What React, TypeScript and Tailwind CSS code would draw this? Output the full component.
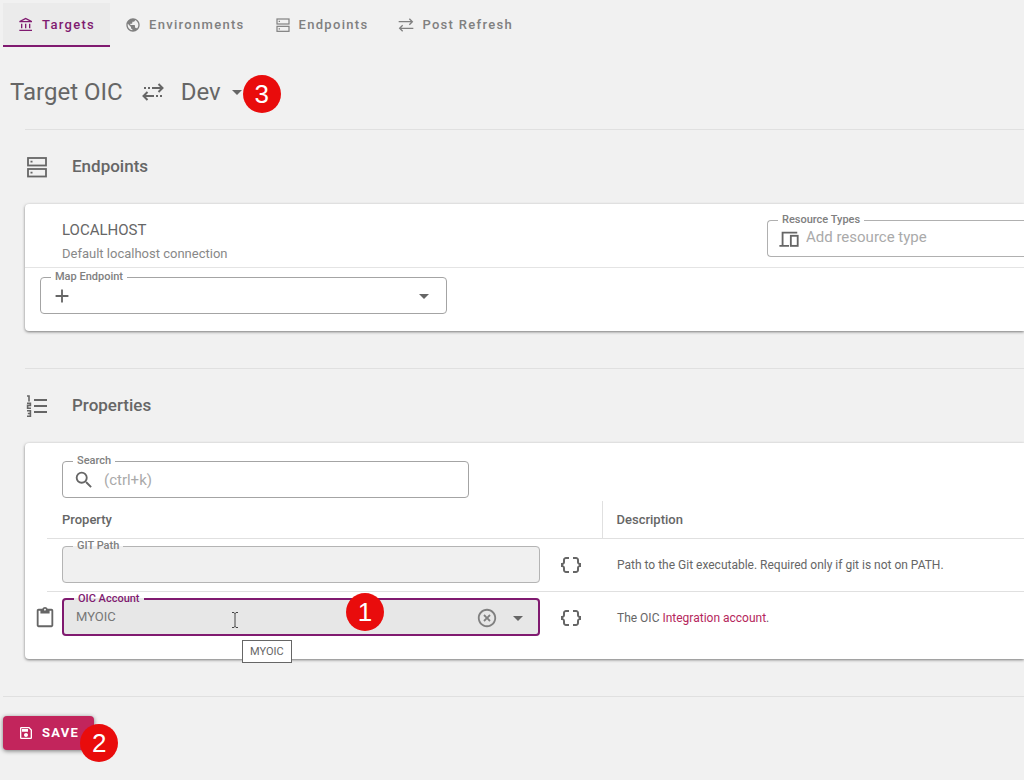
import type { ReactNode } from 'react'
import {
  MdAdd,
  MdArrowDropDown,
  MdContentPaste,
  MdDataObject,
  MdHighlightOff,
  MdOutlineAccountBalance,
  MdOutlineSave,
  MdPublic,
  MdSearch,
} from 'react-icons/md'

type IconProps = { className?: string }

function ServerIcon({ className }: IconProps) {
  return (
    <svg viewBox="0 0 24 24" fill="none" stroke="currentColor" strokeWidth="1.8" className={className}>
      <rect x="3" y="3" width="18" height="7.5" />
      <rect x="3" y="14" width="18" height="7.5" />
      <path d="M5.5 6.7h2M5.5 17.7h2" />
    </svg>
  )
}

function SwapIcon({ className }: IconProps) {
  return (
    <svg viewBox="0 0 24 24" fill="none" stroke="currentColor" strokeWidth="2" className={className}>
      <path d="M1 7h20M17 2.5 21.5 7 17 11.5M23 17H3M7 12.5 2.5 17 7 21.5" />
    </svg>
  )
}

function TransferIcon({ className }: IconProps) {
  return (
    <svg viewBox="0 0 24 24" fill="none" stroke="currentColor" strokeWidth="2" className={className}>
      <path d="M3 8h2M7 8h2M11 8h10M17.5 4 21.5 8l-4 4M21 16h-2M17 16h-2M13 16H3M6.5 12 2.5 16l4 4" />
    </svg>
  )
}

function NumberedListIcon({ className }: IconProps) {
  return (
    <svg viewBox="0 0 24 24" fill="none" stroke="currentColor" strokeWidth="1.6" className={className}>
      <path d="M2 2h2v5.5M2 9.2h3.4v2.2H2.6v2.8h3.4M2 16.8h3.4v5.4H2M2.8 19.5h2.6" />
      <path strokeWidth="2" d="M9 6h13M9 12h13M9 18h13" />
    </svg>
  )
}

function DevicesIcon({ className }: IconProps) {
  return (
    <svg viewBox="0 0 24 24" fill="none" stroke="currentColor" strokeWidth="2" className={className}>
      <path d="M21 5H5v14M1.5 19.5h10.5" />
      <rect x="14" y="8.5" width="7.5" height="11" />
    </svg>
  )
}

function TextCursor({ className }: IconProps) {
  return (
    <svg viewBox="0 0 8 16" fill="none" stroke="#444" className={className}>
      <path d="M1 .5h2l1 1 1-1h2M4 1v14M1 15.5h2l1-1 1 1h2" />
    </svg>
  )
}

const tabs = [
  { label: 'Targets', icon: MdOutlineAccountBalance, active: true },
  { label: 'Environments', icon: MdPublic },
  { label: 'Endpoints', icon: ServerIcon },
  { label: 'Post Refresh', icon: SwapIcon },
]

function Marker({ n, className }: { n: number; className: string }) {
  return (
    <span
      className={`absolute z-10 flex size-[38px] items-center justify-center rounded-full bg-[#e90c0c] font-['Liberation_Sans',sans-serif] text-[26px] leading-none text-white ${className}`}
    >
      {n}
    </span>
  )
}

type FieldProps = { id: string; label: string; className: string; labelClass?: string; children: ReactNode }

function Field({ id, label, className, labelClass = 'text-[#808080]', children }: FieldProps) {
  return (
    <fieldset className={`h-[43px] min-w-0 ${className}`}>
      <legend className={`ml-[10px] px-1 text-[11px] leading-3 font-medium ${labelClass}`}>
        <label htmlFor={id} className="block">{label}</label>
      </legend>
      <div className="flex h-[26px] items-center">{children}</div>
    </fieldset>
  )
}

function SectionHeading({ icon, title }: { icon: ReactNode; title: string }) {
  return (
    <div className="flex h-[74px] items-center gap-[23px] text-[#666]">
      {icon}
      <h2 className="text-[17px] font-medium">{title}</h2>
    </div>
  )
}

export default function App() {
  return (
    <div className="min-h-screen overflow-hidden bg-[#f1f1f1] pt-[3px] font-[Roboto,sans-serif] text-[#666]">
      <nav className="flex pl-[3px]">
        {tabs.map(({ label, icon: Icon, active }) => (
          <button
            key={label}
            type="button"
            className={`flex h-11 items-center gap-2 border-b-2 px-[15px] pt-0.5 text-[13px] font-medium tracking-widest ${
              active ? 'border-[#801a70] bg-[#ebebeb] text-[#801a70]' : 'border-transparent text-[#808080]'
            }`}
          >
            <Icon className="size-4" />
            {label}
          </button>
        ))}
      </nav>

      <header className="flex h-[82px] items-center pt-2 pl-[10px] text-2xl">
        <h1>Target OIC</h1>
        <TransferIcon className="mr-4 ml-[18px] size-6" />
        <div className="relative flex items-center">
          <select aria-label="Environment" className="appearance-none bg-transparent">
            <option>Dev</option>
          </select>
          <MdArrowDropDown className="ml-1 size-6" />
          <Marker n={3} className="-right-8 -bottom-[5px]" />
        </div>
      </header>

      <main className="pl-[25px]">
        <section className="border-t border-[#e0e0e0]">
          <SectionHeading icon={<ServerIcon className="size-6" />} title="Endpoints" />
          <div className="h-[127px] rounded-l bg-white shadow-[0_1px_3px_rgba(0,0,0,0.5)]">
            <div className="flex h-16 items-start justify-between border-b border-[#e4e4e4] pt-[10px]">
              <div className="pt-1 pl-[37px]">
                <p className="text-[15px] leading-6">LOCALHOST</p>
                <p className="text-[13px] leading-6 text-[#888]">Default localhost connection</p>
              </div>
              <Field id="resource-types" label="Resource Types" className="w-[257px] rounded-l border border-r-0 border-[#b0b0b0]">
                <DevicesIcon className="ml-[10px] size-[22px] shrink-0" />
                <input
                  id="resource-types"
                  placeholder="Add resource type"
                  className="ml-1.5 min-w-0 flex-1 bg-transparent pb-1 text-[15px] outline-none placeholder:text-[#aaa]"
                />
              </Field>
            </div>
            <div className="pt-[3px] pl-[15px]">
              <Field id="map-endpoint" label="Map Endpoint" className="w-[407px] rounded border border-[#a4a4a4]">
                <MdAdd className="ml-[10px] size-[22px] shrink-0" />
                <select id="map-endpoint" className="h-6 min-w-0 flex-1 appearance-none bg-transparent">
                  <option value="" />
                </select>
                <MdArrowDropDown className="mr-[10px] size-6 shrink-0" />
              </Field>
            </div>
          </div>
        </section>

        <section className="mt-[37px] border-t border-[#e0e0e0]">
          <SectionHeading icon={<NumberedListIcon className="size-6" />} title="Properties" />
          <div className="h-[216px] rounded-l bg-white pt-3 pl-[22px] shadow-[0_1px_3px_rgba(0,0,0,0.5)]">
            <div className="pl-[15px]">
              <Field id="search" label="Search" className="w-[407px] rounded border border-[#a4a4a4]">
                <MdSearch className="ml-[10px] size-[22px] shrink-0" />
                <input
                  id="search"
                  type="search"
                  placeholder="(ctrl+k)"
                  className="ml-[9px] min-w-0 flex-1 bg-transparent text-[15px] outline-none placeholder:text-[#aaa]"
                />
              </Field>
            </div>

            <table className="mt-[3px] w-full table-fixed border-collapse text-left">
              <thead>
                <tr className="h-[37px] border-b border-[#e0e0e0] text-[13px]">
                  <th className="w-[555px] pl-[15px] font-medium">Property</th>
                  <th className="border-l border-[#e0e0e0] pl-[14px] font-medium">Description</th>
                </tr>
              </thead>
              <tbody className="text-xs">
                <tr className="h-[53px] border-b border-[#e0e0e0]">
                  <td className="p-0 pb-[6px] pl-[15px]">
                    <div className="flex items-end">
                      <Field id="git-path" label="GIT Path" className="w-[478px] rounded border border-[#b4b4b4] bg-[#f0f0f0]">
                        <input id="git-path" className="min-w-0 flex-1 bg-transparent px-[13px] text-sm outline-none" />
                      </Field>
                      <button type="button" aria-label="Edit GIT Path expression" className="mb-[6px] ml-[19px]">
                        <MdDataObject className="size-6" />
                      </button>
                    </div>
                  </td>
                  <td className="p-0 pl-[15px]">Path to the Git executable. Required only if git is not on PATH.</td>
                </tr>
                <tr className="h-[53px]">
                  <td className="p-0 pb-[6px]">
                    <div className="relative flex items-end">
                      <button type="button" aria-label="Paste" className="mr-[6px] mb-[7px] -ml-[13px]">
                        <MdContentPaste className="size-[22px]" />
                      </button>
                      <Field
                        id="oic-account"
                        label="OIC Account"
                        className="w-[478px] rounded border-2 border-[#801a70] bg-[#e7e7e7]"
                        labelClass="text-[#801a70]"
                      >
                        <select id="oic-account" className="min-w-0 flex-1 appearance-none bg-transparent pb-1 pl-3 text-[13px] text-[#777] outline-none">
                          <option>MYOIC</option>
                        </select>
                        <button type="button" aria-label="Clear">
                          <MdHighlightOff className="size-[22px] text-[#808080]" />
                        </button>
                        <MdArrowDropDown className="mr-2 ml-2 size-6 shrink-0" />
                      </Field>
                      <button type="button" aria-label="Edit OIC Account expression" className="mb-[6px] ml-[19px]">
                        <MdDataObject className="size-6" />
                      </button>
                      <TextCursor className="absolute bottom-2 left-[184px] h-4 w-2" />
                      <Marker n={1} className="bottom-[5px] left-[299px]" />
                      <div role="tooltip" className="absolute top-full left-[195px] mt-1 border border-[#666] bg-white px-[7px] text-[11px] leading-[21px]">
                        MYOIC
                      </div>
                    </div>
                  </td>
                  <td className="p-0 pl-[15px]">
                    The OIC <a href="#integration-account" className="text-[#b5265c]">Integration account</a>.
                  </td>
                </tr>
              </tbody>
            </table>
          </div>
        </section>
      </main>

      <footer className="mt-[37px] ml-[3px] border-t border-[#e0e0e0] pt-[19px]">
        <div className="relative inline-block">
          <button
            type="button"
            className="flex h-[34px] items-center gap-2 rounded bg-[#c2255c] px-[15px] text-[13px] font-bold tracking-widest text-white shadow-[0_1px_4px_rgba(0,0,0,0.5)]"
          >
            <MdOutlineSave className="size-4" />
            SAVE
          </button>
          <Marker n={2} className="-right-6 -bottom-3" />
        </div>
      </footer>
    </div>
  )
}
